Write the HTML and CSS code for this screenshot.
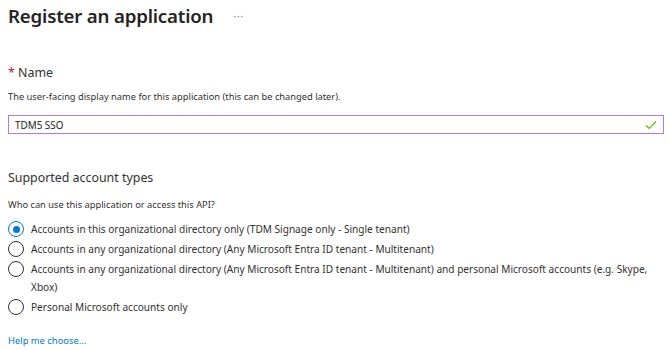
FILE: index.html
```html
<!DOCTYPE html>
<html>
<head>
<meta charset="utf-8">
<link rel="stylesheet" href="styles.css">
</head>
<body>
<div class="page">
  <div class="header">
    <h1 class="title">Register an application</h1>
    <span class="more">···</span>
  </div>

  <div class="field">
    <div class="label"><span class="req">*</span> Name</div>
    <div class="desc">The user-facing display name for this application (this can be changed later).</div>
    <div class="input">
      <span class="value">TDM5 SSO</span>
      <svg class="check" width="12" height="10" viewBox="0 0 12 10"><path d="M1 5.5 L4.2 8.5 L11 1.5" fill="none" stroke="#6bb700" stroke-width="1.2"/></svg>
    </div>
  </div>

  <div class="section">
    <div class="section-title">Supported account types</div>
    <div class="question">Who can use this application or access this API?</div>
    <div class="radios">
      <div class="radio-row">
        <span class="radio checked"></span>
        <span class="radio-text">Accounts in this organizational directory only (TDM Signage only - Single tenant)</span>
      </div>
      <div class="radio-row">
        <span class="radio"></span>
        <span class="radio-text">Accounts in any organizational directory (Any Microsoft Entra ID tenant - Multitenant)</span>
      </div>
      <div class="radio-row">
        <span class="radio"></span>
        <span class="radio-text">Accounts in any organizational directory (Any Microsoft Entra ID tenant - Multitenant) and personal Microsoft accounts (e.g. Skype, Xbox)</span>
      </div>
      <div class="radio-row">
        <span class="radio"></span>
        <span class="radio-text">Personal Microsoft accounts only</span>
      </div>
    </div>
    <a class="help" href="#">Help me choose...</a>
  </div>
</div>
</body>
</html>
```

FILE: styles.css
```css
html, body {
  margin: 0;
  padding: 0;
  background: #ffffff;
}
body {
  font-family: "Noto Sans", "Open Sans", sans-serif;
  color: #323130;
}
.page {
  padding: 0 4px 0 8px;
}
.header {
  display: flex;
  align-items: center;
  height: 30px;
}
.title {
  margin: 0;
  font-size: 18.7px;
  font-weight: 600;
  color: #252423;
  letter-spacing: -0.2px;
}
.more {
  margin-left: 20px;
  font-size: 11px;
  color: #8a8886;
  letter-spacing: 0.5px;
}
.field {
  margin-top: 34px;
  margin-right: 2px;
}
.label {
  font-size: 12.4px;
  line-height: 18px;
  color: #323130;
}
.req {
  color: #a4262c;
}
.desc {
  margin-top: 8px;
  font-size: 9.3px;
  line-height: 14px;
  color: #323130;
}
.input {
  margin-top: 11px;
  height: 19px;
  box-sizing: border-box;
  border: 1px solid #b876d8;
  display: flex;
  align-items: center;
  justify-content: space-between;
  padding: 0 6px 0 6px;
}
.value {
  font-size: 9.9px;
  color: #252423;
}
.check {
  display: block;
}
.section {
  margin-top: 35px;
}
.section-title {
  font-size: 12.4px;
  line-height: 18px;
  color: #323130;
}
.question {
  margin-top: 11px;
  font-size: 9.3px;
  line-height: 14px;
}
.radios {
  margin-top: 8px;
  display: flex;
  flex-direction: column;
  gap: 2px;
}
.radio-row {
  display: flex;
  align-items: flex-start;
  gap: 7px;
}
.radio {
  flex: none;
  width: 16px;
  height: 16px;
  margin-top: 1px;
  box-sizing: border-box;
  border: 1px solid #323130;
  border-radius: 50%;
  position: relative;
}
.radio.checked {
  border-color: #0078d4;
}
.radio.checked::after {
  content: "";
  position: absolute;
  left: 3.5px;
  top: 3.5px;
  width: 7px;
  height: 7px;
  border-radius: 50%;
  background: #0078d4;
}
.radio-text {
  font-size: 10.1px;
  line-height: 18px;
}
.help {
  display: inline-block;
  margin-top: 18px;
  font-size: 9.4px;
  line-height: 14px;
  color: #0078d4;
  text-decoration: none;
}
```
